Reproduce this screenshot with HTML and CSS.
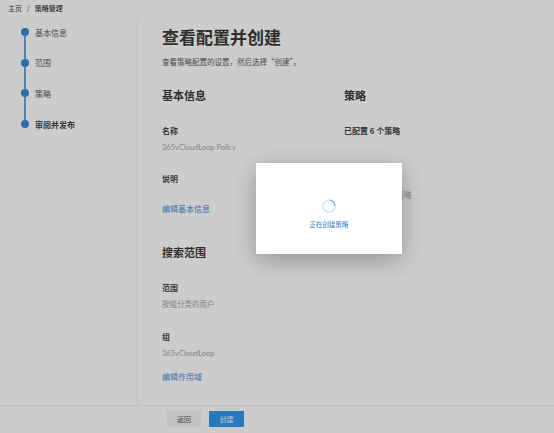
FILE: index.html
```html
<!DOCTYPE html>
<html lang="zh-CN">
<head>
<meta charset="utf-8">
<title>查看配置并创建</title>
<link rel="stylesheet" href="styles.css">
</head>
<body>
<div class="app">
  <div class="breadcrumb"><span>主页</span><span class="sep">/</span><span class="current">策略管理</span></div>
  <div class="main">
    <nav class="nav">
      <div class="step"><span class="dot"></span><span class="step-label">基本信息</span></div>
      <div class="connector"></div>
      <div class="step"><span class="dot"></span><span class="step-label">范围</span></div>
      <div class="connector"></div>
      <div class="step"><span class="dot"></span><span class="step-label">策略</span></div>
      <div class="connector"></div>
      <div class="step"><span class="dot"></span><span class="step-label active">审阅并发布</span></div>
    </nav>
    <section class="content">
      <h1 class="title">查看配置并创建</h1>
      <p class="subtitle">查看策略配置的设置，然后选择“创建”。</p>
      <div class="columns">
        <div class="col col-left">
          <h2 class="section">基本信息</h2>
          <div class="label">名称</div>
          <div class="value">365vCloudLoop Policy</div>
          <div class="label gap-l">说明</div>
          <a class="link gap-link">编辑基本信息</a>
          <h2 class="section gap-section">搜索范围</h2>
          <div class="label">范围</div>
          <div class="value">按组分类的用户</div>
          <div class="label gap-l2">组</div>
          <div class="value">365vCloudLoop</div>
          <a class="link gap-link2">编辑作用域</a>
        </div>
        <div class="col col-right">
          <h2 class="section">策略</h2>
          <div class="label">已配置 6 个策略</div>
          <div class="value gap-hidden">数据丢失防护类策略</div>
        </div>
      </div>
    </section>
  </div>
  <footer class="footer">
    <button class="btn btn-back">返回</button>
    <button class="btn btn-primary">创建</button>
  </footer>
</div>
<div class="overlay"></div>
<div class="dialog">
  <svg class="spinner" width="14" height="14" viewBox="0 0 14 14">
    <circle cx="7" cy="7" r="6" fill="none" stroke="#c7e0f4" stroke-width="1.2"/>
    <path d="M7 1 A6 6 0 0 1 13 7" fill="none" stroke="#7ab6e8" stroke-width="1.2"/>
  </svg>
  <div class="dialog-text">正在创建策略</div>
</div>
</body>
</html>
```
FILE: styles.css
```css
* { box-sizing: border-box; }
html, body { margin: 0; padding: 0; }
body {
  width: 554px;
  height: 433px;
  overflow: hidden;
  background: #ffffff;
  font-family: "Noto Sans CJK SC", "Noto Sans", sans-serif;
  color: #323130;
}
.app {
  display: flex;
  flex-direction: column;
  height: 433px;
}
.breadcrumb {
  height: 17px;
  line-height: 17px;
  padding-left: 8px;
  font-size: 7px;
  color: #484644;
  flex: none;
}
.breadcrumb .sep { margin: 0 5px; }
.breadcrumb .current { font-weight: 500; color: #323130; }
.main {
  flex: 1;
  display: flex;
  min-height: 0;
}
.nav {
  width: 138px;
  flex: none;
  border-right: 1px solid #f0f0f0;
  padding: 11px 0 0 21px;
}
.step {
  display: flex;
  align-items: center;
  height: 8px;
  gap: 6px;
}
.dot {
  width: 8px;
  height: 8px;
  border-radius: 50%;
  background: #3a89d6;
  flex: none;
}
.step-label {
  font-size: 8px;
  color: #605e5c;
}
.step-label.active { font-weight: 700; color: #484644; }
.connector {
  width: 2px;
  height: 22.7px;
  margin-left: 3px;
  background: #6aa6dc;
}
.content {
  flex: 1;
  padding: 10px 0 0 24px;
}
.title {
  margin: 0;
  font-size: 17px;
  line-height: 20px;
  font-weight: 700;
  color: #3b3a39;
}
.subtitle {
  margin: 10px 0 0;
  font-size: 7.5px;
  line-height: 10px;
  color: #605e5c;
}
.columns {
  display: flex;
  margin-top: 21px;
}
.col-left { width: 182px; }
.col-right { flex: 1; }
.section {
  margin: 0;
  font-size: 11px;
  line-height: 14px;
  font-weight: 700;
  color: #3b3a39;
}
.label {
  margin-top: 22.5px;
  font-size: 8px;
  line-height: 11px;
  font-weight: 700;
  color: #484644;
}
.value {
  margin-top: 6px;
  font-size: 7.5px;
  line-height: 11px;
  color: #a8a6a4;
  font-family: "Lato", "Noto Sans CJK SC", sans-serif;
}
.link {
  display: block;
  font-size: 8px;
  line-height: 11px;
  color: #4a90d4;
}
.gap-l { margin-top: 20px; }
.gap-link { margin-top: 19px; }
.gap-section { margin-top: 31.5px; }
.gap-l2 { margin-top: 21px; }
.gap-link2 { margin-top: 12px; }
.gap-hidden { margin-top: 54px; }
.footer {
  height: 28px;
  flex: none;
  border-top: 1px solid #f0f0f0;
  padding: 5px 0 0 167px;
  display: flex;
  gap: 8px;
  align-items: flex-start;
}
.btn {
  height: 16px;
  border: none;
  padding: 0;
  font-family: "Noto Sans CJK SC", sans-serif;
  font-size: 7px;
  line-height: 16px;
}
.btn-back {
  width: 34px;
  background: #f3f2f1;
  color: #605e5c;
}
.btn-primary {
  width: 35px;
  background: #3596ec;
  color: #e8f2fc;
}
.overlay {
  position: fixed;
  inset: 0;
  background: rgba(0, 0, 0, 0.2);
}
.dialog {
  position: fixed;
  left: 256px;
  top: 163px;
  width: 146px;
  height: 91px;
  background: #ffffff;
  box-shadow: 0 6px 22px rgba(0, 0, 0, 0.28);
  display: flex;
  flex-direction: column;
  align-items: center;
  padding-top: 36px;
}
.spinner { display: block; }
.dialog-text {
  margin-top: 7px;
  font-size: 6.5px;
  line-height: 9px;
  color: #2b7cd3;
}
```
